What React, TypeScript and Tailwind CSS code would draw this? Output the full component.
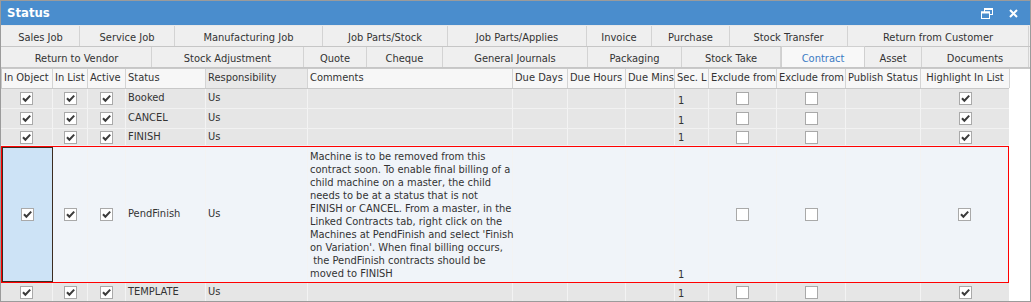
import type { ReactNode } from "react";

const row1Tabs: [string, number][] = [
  ["Sales Job", 78],
  ["Service Job", 95],
  ["Manufacturing Job", 148],
  ["Job Parts/Stock", 125],
  ["Job Parts/Applies", 139],
  ["Invoice", 65],
  ["Purchase", 78],
  ["Stock Transfer", 118],
  ["Return from Customer", 181],
];

const row2Tabs: [string, number][] = [
  ["Return to Vendor", 150],
  ["Stock Adjustment", 152],
  ["Quote", 63],
  ["Cheque", 76],
  ["General Journals", 145],
  ["Packaging", 94],
  ["Stock Take", 99],
  ["Contract", 84],
  ["Asset", 57],
  ["Documents", 107],
];

type Column = { title: string; width: number; center?: boolean };

const columns: Column[] = [
  { title: "In Object", width: 52 },
  { title: "In List", width: 35 },
  { title: "Active", width: 38 },
  { title: "Status", width: 80 },
  { title: "Responsibility", width: 102 },
  { title: "Comments", width: 205 },
  { title: "Due Days", width: 55 },
  { title: "Due Hours", width: 58 },
  { title: "Due Mins", width: 49 },
  { title: "Sec. L", width: 34 },
  { title: "Exclude from", width: 68 },
  { title: "Exclude from", width: 69 },
  { title: "Publish Status", width: 75 },
  { title: "Highlight In List", width: 89, center: true },
];

const comments = [
  "Machine is to be removed from this",
  "contract soon. To enable final billing of a",
  "child machine on a master, the child",
  "needs to be at a status that is not",
  "FINISH or CANCEL. From a master, in the",
  "Linked Contracts tab, right click on the",
  "Machines at PendFinish and select 'Finish",
  "on Variation'. When final billing occurs,",
  " the PendFinish contracts should be",
  "moved to FINISH",
];

type StatusRow = {
  status: string;
  height: string;
  selected?: boolean;
  comments?: string[];
};

const rows: StatusRow[] = [
  { status: "Booked", height: "h-[20px]" },
  { status: "CANCEL", height: "h-[20px]" },
  { status: "FINISH", height: "h-[17px]" },
  { status: "PendFinish", height: "h-[137px]", selected: true, comments },
  { status: "TEMPLATE", height: "h-[19px]" },
];

function CheckBox({ checked }: { checked?: boolean }) {
  return (
    <span className="flex h-[13px] w-[13px] items-center justify-center border border-[#a9a9a9] bg-white">
      {checked ? (
        <svg width="9" height="9" viewBox="0 0 9 9">
          <path d="M1 4.2 L3.4 6.8 L8.2 1.6" stroke="#3b3b3b" strokeWidth="2" fill="none" />
        </svg>
      ) : null}
    </span>
  );
}

function Cell({
  width,
  className = "",
  children,
}: {
  width: number;
  className?: string;
  children?: ReactNode;
}) {
  return (
    <div
      className={`flex shrink-0 border-r border-[#f3f3f3] ${className}`}
      style={{ width }}
    >
      {children}
    </div>
  );
}

function TabRow({ tabs, active }: { tabs: [string, number][]; active?: string }) {
  return (
    <div className="flex h-[21px] border-b border-[#c6c6c6] pl-px">
      {tabs.map(([label, width]) =>
        label === active ? (
          <div
            key={label}
            className="-mt-px flex h-[21px] shrink-0 items-center justify-center border-x border-t border-[#d0d0d0] bg-[#f8f8f8] pt-[5px] text-[#3b7bc4]"
            style={{ width }}
          >
            {label}
          </div>
        ) : (
          <div
            key={label}
            className="flex shrink-0 items-center justify-center border-r border-[#d3d3d3] pt-[5px]"
            style={{ width }}
          >
            {label}
          </div>
        ),
      )}
    </div>
  );
}

export default function App() {
  return (
    <div className="flex h-[302px] w-[1031px] flex-col border border-[#9b9b9b] bg-white text-[11px] text-[#333] [font-family:'DejaVu_Sans_Condensed','DejaVu_Sans',sans-serif]">
      <div className="flex h-[24px] shrink-0 items-center justify-between bg-[#4a8dcd] pl-[6px] pr-[12px] text-white">
        <span className="text-[13px] font-bold">Status</span>
        <div className="flex items-center gap-[16px]">
          <svg width="12" height="11" viewBox="0 0 12 11">
            <rect x="3.5" y="0.5" width="8" height="6" fill="none" stroke="white" />
            <rect x="0.5" y="4" width="8" height="6.5" fill="#4a8dcd" stroke="white" />
            <rect x="0" y="3.5" width="9" height="2" fill="white" />
            <rect x="3" y="0" width="9" height="2" fill="white" />
          </svg>
          <svg width="9" height="9" viewBox="0 0 9 9">
            <path d="M1 1 L8 8 M8 1 L1 8" stroke="white" strokeWidth="2" />
          </svg>
        </div>
      </div>

      <div className="shrink-0 border-t border-[#e8e8e8] bg-[#efefef]">
        <TabRow tabs={row1Tabs} />
        <TabRow tabs={row2Tabs} active="Contract" />
      </div>

      <div className="flex-1 overflow-hidden border-t border-[#c9c9c9] bg-white">
        <div className="flex h-[20px] w-[1008px] border-b border-[#c8c8c8] bg-[#f7f7f7]">
          {columns.map((col, i) => (
            <div
              key={i}
              className={`flex shrink-0 items-center overflow-hidden whitespace-nowrap border-r border-[#d4d4d4] px-[2px] ${
                col.center ? "justify-center" : ""
              } ${col.title === "Responsibility" ? "bg-[#e9e9e9]" : ""} ${i === 0 ? "border-l border-l-[#c8c8c8]" : ""}`}
              style={{ width: col.width }}
            >
              {col.title}
            </div>
          ))}
        </div>

        {rows.map((row) => (
          <div
            key={row.status}
            className={`flex w-[1008px] ${row.height} ${
              row.selected
                ? "border border-[#ff0000] bg-[#f0f4f9]"
                : "border-b border-[#f2f2f2] bg-[#e6e6e6]"
            }`}
          >
            {row.selected ? (
              <div className="flex w-[51px] shrink-0 items-center justify-center border border-[#3b2c20] bg-[#cde3f6]">
                <CheckBox checked />
              </div>
            ) : (
              <Cell width={52} className="items-center justify-center">
                <CheckBox checked />
              </Cell>
            )}
            <Cell width={35} className="items-center justify-center">
              <CheckBox checked />
            </Cell>
            <Cell width={38} className="items-center justify-center">
              <CheckBox checked />
            </Cell>
            <Cell width={80} className="items-center pl-[2px]">
              {row.status}
            </Cell>
            <Cell width={102} className="items-center pl-[2px]">
              Us
            </Cell>
            <Cell width={205} className="flex-col pl-[2px] pt-[3px] leading-[13px]">
              {row.comments?.map((line) => (
                <span key={line} className="whitespace-pre">
                  {line}
                </span>
              ))}
            </Cell>
            <Cell width={55} />
            <Cell width={58} />
            <Cell width={49} />
            <Cell width={34} className="items-end pb-px pl-[3px] leading-[13px]">
              1
            </Cell>
            <Cell width={68} className="items-center justify-center">
              <CheckBox />
            </Cell>
            <Cell width={69} className="items-center justify-center">
              <CheckBox />
            </Cell>
            <Cell width={75} />
            <Cell width={row.selected ? 87 : 89} className="items-center justify-center border-r-0">
              <CheckBox checked />
            </Cell>
          </div>
        ))}
      </div>
    </div>
  );
}
